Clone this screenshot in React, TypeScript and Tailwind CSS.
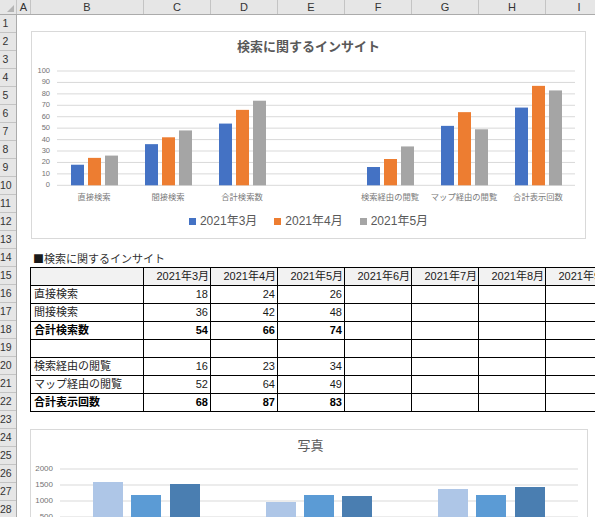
import React from "react";

const FONT = '"Liberation Sans", "Noto Sans CJK JP", sans-serif';
const CJK = '"Noto Sans CJK JP", sans-serif';

const cols = [
  { name: "A", w: "w-[14px]" },
  { name: "B", w: "w-[113px]" },
  { name: "C", w: "w-[67px]" },
  { name: "D", w: "w-[67px]" },
  { name: "E", w: "w-[67px]" },
  { name: "F", w: "w-[67px]" },
  { name: "G", w: "w-[67px]" },
  { name: "H", w: "w-[67px]" },
  { name: "I", w: "w-[67px]" },
];

const months = ["2021年3月", "2021年4月", "2021年5月", "2021年6月", "2021年7月", "2021年8月", "2021年9月"];

const rows = [
  { label: "直接検索", vals: [18, 24, 26] },
  { label: "間接検索", vals: [36, 42, 48] },
  { label: "合計検索数", vals: [54, 66, 74], bold: true },
  { label: "", vals: [] as number[] },
  { label: "検索経由の閲覧", vals: [16, 23, 34] },
  { label: "マップ経由の閲覧", vals: [52, 64, 49] },
  { label: "合計表示回数", vals: [68, 87, 83], bold: true },
];

const series = [
  { name: "2021年3月", color: "#4472c4" },
  { name: "2021年4月", color: "#ed7d31" },
  { name: "2021年5月", color: "#a5a5a5" },
];

// x centers inside the svg, one slot left blank like the sheet
const groups = [
  { x: 62, label: "直接検索", vals: [18, 24, 26] },
  { x: 136, label: "間接検索", vals: [36, 42, 48] },
  { x: 210, label: "合計検索数", vals: [54, 66, 74] },
  { x: 358, label: "検索経由の閲覧", vals: [16, 23, 34] },
  { x: 432, label: "マップ経由の閲覧", vals: [52, 64, 49] },
  { x: 506, label: "合計表示回数", vals: [68, 87, 83] },
];

const photoBars = [
  { x: 62, top: 26, color: "#aec6e7" },
  { x: 100, top: 39, color: "#5b9bd5" },
  { x: 139, top: 28, color: "#4a7eb1" },
  { x: 235, top: 46, color: "#aec6e7" },
  { x: 273, top: 39, color: "#5b9bd5" },
  { x: 311, top: 40, color: "#4a7eb1" },
  { x: 407, top: 33, color: "#aec6e7" },
  { x: 445, top: 39, color: "#5b9bd5" },
  { x: 484, top: 31, color: "#4a7eb1" },
];

function InsightChart() {
  const y = (v: number) => 128.3 - v * 1.143;
  return (
    <div className="ml-[1px] mt-[16px] flex h-[208px] w-[555px] flex-col items-center border border-[#d9d9d9] bg-white">
      <div className="mt-[5px] h-[20px] text-[13px] font-bold leading-[20px] text-[#595959]">検索に関するインサイト</div>
      <svg width="553" height="150" className="block">
        {[0, 10, 20, 30, 40, 50, 60, 70, 80, 90, 100].map((v) => (
          <g key={v}>
            <line x1="25" x2="543" y1={y(v)} y2={y(v)} stroke="#d9d9d9" strokeWidth="1" />
            <text x="18" y={y(v)} textAnchor="end" dominantBaseline="middle" fontSize="7.5" fill="#737373" fontFamily={FONT}>
              {v}
            </text>
          </g>
        ))}
        {groups.map((g) => (
          <g key={g.label}>
            {g.vals.map((v, i) => (
              <rect key={i} x={g.x - 23 + i * 17} y={y(v)} width="13" height={v * 1.143} fill={series[i].color} />
            ))}
            <text x={g.x} y="141" textAnchor="middle" dominantBaseline="middle" fontSize="8.3" fill="#7a7a7a" fontFamily={FONT}>
              {g.label}
            </text>
          </g>
        ))}
      </svg>
      <div className="mt-[6px] flex h-[16px] items-center gap-[17px] text-[12px] leading-[16px] text-[#595959]">
        {series.map((s) => (
          <div key={s.name} className="flex items-center gap-[4px]">
            <span className="block h-[7px] w-[7px]" style={{ background: s.color }} />
            <span>{s.name}</span>
          </div>
        ))}
      </div>
    </div>
  );
}

function PhotoChart() {
  return (
    <div className="mt-[17px] flex h-[120px] w-[558px] flex-col items-center border border-[#d9d9d9] bg-white">
      <div className="mt-[6px] h-[20px] pl-[3px] text-[13px] leading-[20px] text-[#595959]">写真</div>
      <svg width="556" height="80" className="block">
        {[
          [2000, 13],
          [1500, 29],
          [1000, 45],
          [500, 61],
        ].map(([v, gy]) => (
          <g key={v}>
            <line x1="29" x2="547" y1={gy} y2={gy} stroke="#d9d9d9" strokeWidth="1" />
            <text x="22" y={gy} textAnchor="end" dominantBaseline="middle" fontSize="8" fill="#737373" fontFamily={FONT}>
              {v}
            </text>
          </g>
        ))}
        {photoBars.map((b, i) => (
          <rect key={i} x={b.x} y={b.top} width="30" height={80 - b.top} fill={b.color} />
        ))}
      </svg>
    </div>
  );
}

function DataTable() {
  return (
    <div className="grid w-max grid-cols-[112px_repeat(7,66px)] gap-px bg-black p-px text-[11px] leading-[17px] text-black">
      <div className="h-[17px] bg-[#f2f2f2]" />
      {months.map((m) => (
        <div key={m} className="h-[17px] bg-[#f2f2f2] pr-[1px] text-right whitespace-nowrap text-[#1a1a1a]">
          {m}
        </div>
      ))}
      {rows.map((r, ri) => (
        <React.Fragment key={ri}>
          <div className={`h-[17px] bg-white pl-[3px] whitespace-nowrap ${r.bold ? "font-bold" : "text-[#262626]"}`}>{r.label}</div>
          {months.map((m, ci) => (
            <div key={m} className={`h-[17px] bg-white pr-[2px] text-right ${r.bold ? "font-bold" : "text-[#1a1a1a]"}`}>
              {r.vals[ci] ?? ""}
            </div>
          ))}
        </React.Fragment>
      ))}
    </div>
  );
}

export default function App() {
  return (
    <div className="h-[517px] w-[595px] overflow-hidden bg-white" style={{ fontFamily: FONT }}>
      <div className="flex h-[15px] border-b border-[#ababab] bg-[#e6e6e6] text-[11px] leading-[14px] text-[#333]">
        <div className="flex h-[14px] w-[17px] shrink-0 items-end justify-end border-r border-[#c4c4c4] pb-[2px] pr-[2px]">
          <svg width="7" height="7" className="block">
            <polygon points="7,0 7,7 0,7" fill="#b4b4b4" />
          </svg>
        </div>
        {cols.map((c) => (
          <div key={c.name} className={`${c.w} shrink-0 border-r border-[#c4c4c4] text-center`}>
            {c.name}
          </div>
        ))}
      </div>
      <div className="flex">
        <div className="flex w-[17px] shrink-0 flex-col border-r border-[#ababab] bg-[#e6e6e6] text-[10.5px] text-[#333]">
          {Array.from({ length: 28 }, (_, i) => (
            <div key={i} className="h-[18px] shrink-0 border-b border-[#c4c4c4] pr-[5px] text-center leading-[17px] whitespace-nowrap">
              {i + 1}
            </div>
          ))}
        </div>
        <div className="flex flex-col items-start pl-[13px]">
          <InsightChart />
          <div className="mt-[10px] h-[18px] pl-[3px] text-[11px] leading-[18px] text-[#333]">
            <span className="text-[#1a1a1a]" style={{ fontFamily: CJK }}>■</span>
            <span style={{ fontFamily: CJK }}>検索に関するインサイト</span>
          </div>
          <DataTable />
          <PhotoChart />
        </div>
      </div>
    </div>
  );
}
